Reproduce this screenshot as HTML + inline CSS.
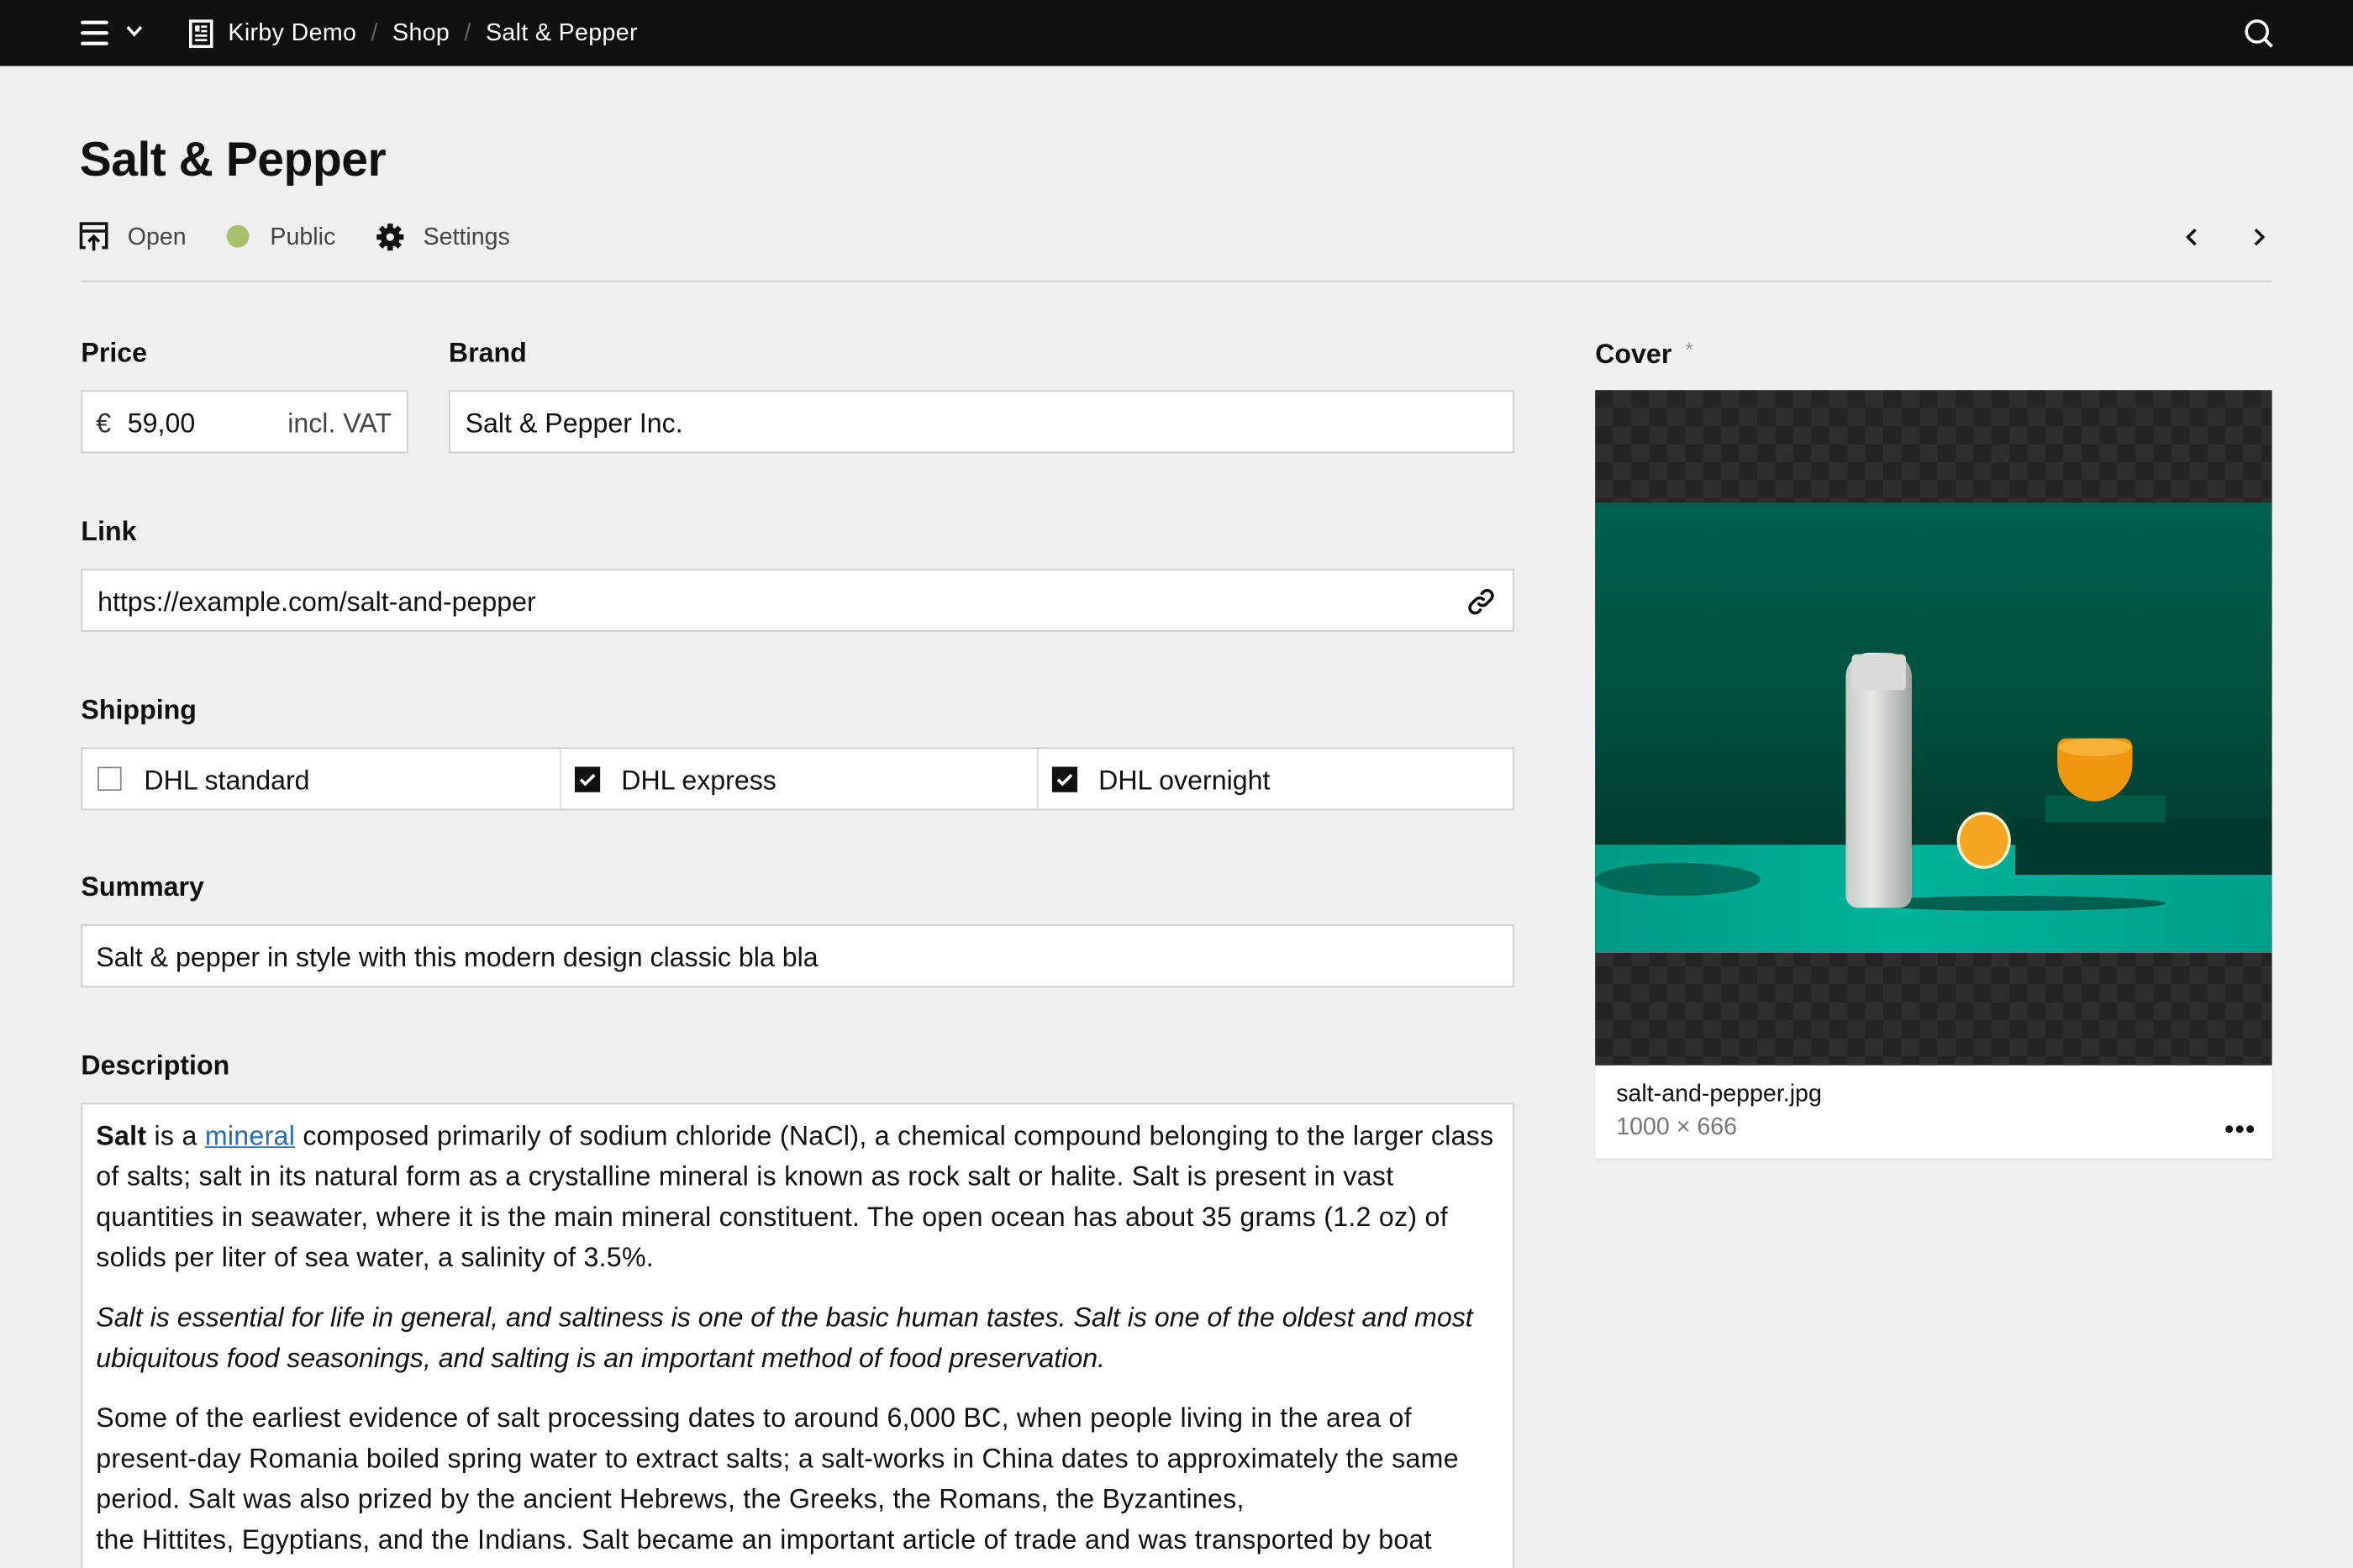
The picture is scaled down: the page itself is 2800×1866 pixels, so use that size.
<!DOCTYPE html>
<html><head><meta charset="utf-8"><style>
html,body{margin:0;padding:0;background:#efefef;overflow:hidden}
body{width:2800px;height:1866px}
#w{width:1568px;height:1045px;transform:scale(1.785714);transform-origin:0 0;position:relative;font-family:"Liberation Sans",sans-serif;color:#000}
.a{position:absolute}
.top{left:0;top:0;width:1568px;height:44px;background:#111;color:#fff;font-size:16px}
.lab{font-size:18px;font-weight:bold;color:#111}
.in{background:#fff;border:1px solid #ccc;box-sizing:border-box;font-size:18px;color:#111}
.desc p{margin:0 0 13px 0}
.cb{background-color:#242424;background-image:conic-gradient(#2e2e2e 25%,transparent 0 50%,#2e2e2e 0 75%,transparent 0);background-size:24px 24px}
</style></head><body><div id="w">
<div class="a top">
 <svg class="a" style="left:53px;top:13px" width="20" height="18" viewBox="0 0 20 18"><g stroke="#fff" stroke-width="2.4" stroke-linecap="round"><line x1="2" y1="2" x2="18" y2="2"/><line x1="2" y1="9" x2="18" y2="9"/><line x1="2" y1="16" x2="18" y2="16"/></g></svg>
 <svg class="a" style="left:83px;top:16px" width="13" height="10" viewBox="0 0 13 10"><path d="M2 2l4.5 5 4.5-5" stroke="#fff" stroke-width="2" fill="none"/></svg>
 <svg class="a" style="left:126px;top:13px" width="16" height="19" viewBox="0 0 16 19"><rect x="1" y="1" width="14" height="17" fill="none" stroke="#fff" stroke-width="2"/><g fill="#fff"><rect x="4" y="4" width="3" height="4"/><rect x="8" y="4" width="4" height="1.5"/><rect x="8" y="7" width="4" height="1.5"/><rect x="4" y="10" width="8" height="1.5"/><rect x="4" y="13" width="8" height="1.5"/></g></svg>
 <div class="a" style="left:152px;top:14px;letter-spacing:0.2px">Kirby Demo <span style="color:#666;margin:0 5px">/</span> Shop <span style="color:#666;margin:0 5px">/</span> Salt &amp; Pepper</div>
 <svg class="a" style="left:1495px;top:12px" width="21" height="21" viewBox="0 0 21 21"><circle cx="9" cy="9" r="7" stroke="#fff" stroke-width="2" fill="none"/><line x1="14" y1="14" x2="19" y2="19" stroke="#fff" stroke-width="2.2"/></svg>
</div>
<div class="a" style="left:53px;top:88px;font-size:32px;font-weight:bold;color:#111;letter-spacing:-0.3px">Salt &amp; Pepper</div>
<svg class="a" style="left:53px;top:148px" width="19" height="20" viewBox="0 0 19 20"><path d="M4 17H1V1h17v16h-3M1 6h17" stroke="#111" stroke-width="2" fill="none"/><path d="M9.5 19V10M6 13l3.5-3.5L13 13" stroke="#111" stroke-width="2" fill="none"/></svg>
<div class="a" style="left:85px;top:150px;font-size:16px;color:#444">Open</div>
<div class="a" style="left:151px;top:150px;width:15px;height:15px;border-radius:50%;background:#a7c06b"></div>
<div class="a" style="left:180px;top:150px;font-size:16px;color:#444">Public</div>
<svg class="a" style="left:250px;top:148px" width="20" height="20" viewBox="0 0 20 20"><g fill="#111"><circle cx="10" cy="10" r="6.5"/><g stroke="#111" stroke-width="3.6"><line x1="10" y1="1" x2="10" y2="19"/><line x1="1" y1="10" x2="19" y2="10"/><line x1="3.6" y1="3.6" x2="16.4" y2="16.4"/><line x1="16.4" y1="3.6" x2="3.6" y2="16.4"/></g></g><circle cx="10" cy="10" r="2.6" fill="#efefef"/></svg>
<div class="a" style="left:282px;top:150px;font-size:16px;color:#444">Settings</div>
<svg class="a" style="left:1455px;top:151px" width="12" height="14" viewBox="0 0 12 14"><path d="M8 2L3 7l5 5" stroke="#111" stroke-width="2" fill="none"/></svg>
<svg class="a" style="left:1499px;top:151px" width="12" height="14" viewBox="0 0 12 14"><path d="M4 2l5 5-5 5" stroke="#111" stroke-width="2" fill="none"/></svg>
<div class="a" style="left:54px;top:187px;width:1460px;height:1px;background:#ccc"></div>

<div class="a lab" style="left:54px;top:225px">Price</div>
<div class="a in" style="left:54px;top:260px;width:218px;height:42px"><span class="a" style="left:9px;top:11px;color:#333">€</span><span class="a" style="left:30px;top:11px">59,00</span><span class="a" style="right:10px;top:11px;color:#444">incl. VAT</span></div>
<div class="a lab" style="left:299px;top:225px">Brand</div>
<div class="a in" style="left:299px;top:260px;width:710px;height:42px;padding:11px 10px">Salt &amp; Pepper Inc.</div>

<div class="a lab" style="left:54px;top:344px">Link</div>
<div class="a in" style="left:54px;top:379px;width:955px;height:42px;padding:11px 10px">https://example.com/salt-and-pepper
<svg class="a" style="right:11px;top:11px" width="20" height="20" viewBox="0 0 20 20"><g stroke="#111" stroke-width="2" fill="none" stroke-linecap="round"><path d="M8.5 11.5a3.5 3.5 0 0 0 5 0l3-3a3.5 3.5 0 0 0-5-5l-1 1"/><path d="M11.5 8.5a3.5 3.5 0 0 0-5 0l-3 3a3.5 3.5 0 0 0 5 5l1-1"/></g></svg></div>

<div class="a lab" style="left:54px;top:463px">Shipping</div>
<div class="a in" style="left:54px;top:498px;width:955px;height:42px">
 <div class="a" style="left:318px;top:0;width:1px;height:40px;background:#ddd"></div>
 <div class="a" style="left:636px;top:0;width:1px;height:40px;background:#ddd"></div>
 <div class="a" style="left:10px;top:12px;width:16px;height:16px;border:1.5px solid #888;box-sizing:border-box"></div>
 <div class="a" style="left:41px;top:11px">DHL standard</div>
 <svg class="a" style="left:328px;top:12px" width="17" height="17" viewBox="0 0 17 17"><rect width="17" height="17" fill="#111"/><path d="M4 8.5l3 3 6-6" stroke="#fff" stroke-width="2" fill="none"/></svg>
 <div class="a" style="left:359px;top:11px">DHL express</div>
 <svg class="a" style="left:646px;top:12px" width="17" height="17" viewBox="0 0 17 17"><rect width="17" height="17" fill="#111"/><path d="M4 8.5l3 3 6-6" stroke="#fff" stroke-width="2" fill="none"/></svg>
 <div class="a" style="left:677px;top:11px">DHL overnight</div>
</div>

<div class="a lab" style="left:54px;top:581px">Summary</div>
<div class="a in" style="left:54px;top:616px;width:955px;height:42px;padding:11px 9px">Salt &amp; pepper in style with this modern design classic bla bla</div>

<div class="a lab" style="left:54px;top:700px">Description</div>
<div class="a in desc" style="left:54px;top:735px;width:955px;height:340px;padding:8px 9px;line-height:27px;letter-spacing:0.15px">
<p><b>Salt</b> is a <u style="color:#2b6cb0">mineral</u> composed primarily of sodium chloride (NaCl), a chemical compound belonging to the larger class of salts; salt in its natural form as a crystalline mineral is known as rock salt or halite. Salt is present in vast<br>quantities in seawater, where it is the main mineral constituent. The open ocean has about 35 grams (1.2 oz) of<br>solids per liter of sea water, a salinity of 3.5%.</p>
<p style="letter-spacing:0;white-space:nowrap"><i>Salt is essential for life in general, and saltiness is one of the basic human tastes. Salt is one of the oldest and most<br>ubiquitous food seasonings, and salting is an important method of food preservation.</i></p>
<p>Some of the earliest evidence of salt processing dates to around 6,000 BC, when people living in the area of<br>present-day Romania boiled spring water to extract salts; a salt-works in China dates to approximately the same<br>period. Salt was also prized by the ancient Hebrews, the Greeks, the Romans, the Byzantines,<br>the Hittites, Egyptians, and the Indians. Salt became an important article of trade and was transported by boat</p>
</div>

<div class="a lab" style="left:1063px;top:225px">Cover <span style="color:#999;font-weight:normal;font-size:14px;margin-left:4px;vertical-align:4px">*</span></div>
<div class="a cb" style="left:1063px;top:260px;width:451px;height:450px;overflow:hidden">
 <div class="a" style="left:0;top:75px;width:451px;height:300px;background:linear-gradient(#00604f 0%,#00503f 45%,#003d30 75%)">
  <div class="a" style="left:0;top:228px;width:451px;height:72px;background:linear-gradient(90deg,#009b85,#00b39b 45%,#00a08a)"></div>
  <div class="a" style="left:0;top:240px;width:110px;height:22px;background:#004a3b;border-radius:50%;opacity:.6"></div>
  <div class="a" style="left:280px;top:210px;width:171px;height:38px;background:#003a2e"></div>
  <div class="a" style="left:300px;top:195px;width:80px;height:18px;background:#005a48"></div>
  <div class="a" style="left:180px;top:262px;width:200px;height:10px;background:#00604f;border-radius:50%"></div>
  <div class="a" style="left:167px;top:100px;width:44px;height:170px;background:linear-gradient(90deg,#c8ccc7,#e6e8e4 40%,#9ea39f);border-radius:16px 16px 8px 8px"></div>
  <div class="a" style="left:171px;top:101px;width:36px;height:24px;background:#d8dbd8;border-radius:3px"></div>
  <div class="a" style="left:308px;top:157px;width:50px;height:42px;background:#f0960f;border-radius:6px 6px 25px 25px"></div>
  <div class="a" style="left:309px;top:157px;width:48px;height:12px;background:#f7b235;border-radius:50%"></div>
  <div class="a" style="left:241px;top:206px;width:36px;height:38px;background:#f4a521;border-radius:50%;border:2px solid #fff3d0;box-sizing:border-box"></div>
 </div>
</div>
<div class="a" style="left:1063px;top:710px;width:451px;height:62px;background:#fff;box-shadow:0 1px 2px rgba(0,0,0,.08)">
 <div class="a" style="left:14px;top:11px;font-size:16px;color:#111">salt-and-pepper.jpg</div>
 <div class="a" style="left:14px;top:33px;font-size:16px;color:#777">1000 × 666</div>
 <div class="a" style="left:420px;top:40px;width:5px;height:5px;border-radius:50%;background:#111;box-shadow:7px 0 #111,14px 0 #111"></div>
</div>
</div></body></html>
